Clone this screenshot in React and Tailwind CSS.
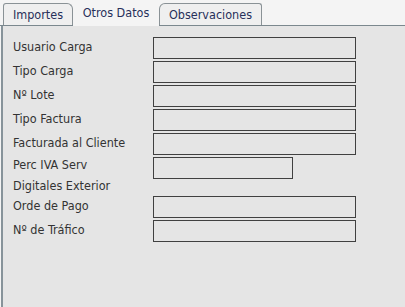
import React from "react";

const rows = [
  { label: "Usuario Carga" },
  { label: "Tipo Carga" },
  { label: "Nº Lote" },
  { label: "Tipo Factura" },
  { label: "Facturada al Cliente" },
  { label: ["Perc IVA Serv", "Digitales Exterior"], short: true },
  { label: "Orde de Pago" },
  { label: "Nº de Tráfico" },
];

export default function App() {
  return (
    <div className="w-[405px] h-[307px] bg-[#f4f4f4] flex flex-col font-['DejaVu_Sans_Condensed','DejaVu_Sans',sans-serif] text-[12.5px] overflow-hidden">
      <div className="flex h-[26px] items-end border-b border-[#7b888e] pl-[3px] shrink-0">
        <div className="w-[70px] h-[22px] border border-b-0 border-[#8a9296] rounded-tl-[3px] rounded-tr-[6px] bg-[#efefef] flex items-center justify-center text-[#27305a] leading-[20px]">
          Importes
        </div>
        <div className="relative z-10 -mb-[1px] w-[86px] h-[26px] bg-[#f4f4f4] flex items-center justify-center text-[#27305a] leading-[20px] pb-[1px]">
          Otros Datos
        </div>
        <div className="w-[103px] h-[22px] border border-b-0 border-[#8a9296] rounded-tl-[6px] rounded-tr-[3px] bg-[#efefef] flex items-center justify-center text-[#27305a] leading-[20px]">
          Observaciones
        </div>
      </div>
      <div className="flex-1 ml-[1px] border-l-2 border-[#87939a] bg-[#e5e5e5] pl-[10px] pt-[11px]">
        <div className="flex flex-col gap-[2px]">
          {rows.map((r, i) => (
            <div key={i} className="flex items-start">
              {Array.isArray(r.label) ? (
                <div className="w-[140px] shrink-0 leading-[20.5px] -mt-[2px] -mb-[2px] text-[#333333]">
                  <div>{r.label[0]}</div>
                  <div>{r.label[1]}</div>
                </div>
              ) : (
                <div className="w-[140px] shrink-0 leading-[20px] text-[#333333]">{r.label}</div>
              )}
              <input
                readOnly
                className={
                  (r.short ? "w-[140px]" : "w-[203px]") +
                  " h-[22px] border border-[#404040] bg-[#e5e5e5] outline-none"
                }
              />
            </div>
          ))}
        </div>
      </div>
    </div>
  );
}
